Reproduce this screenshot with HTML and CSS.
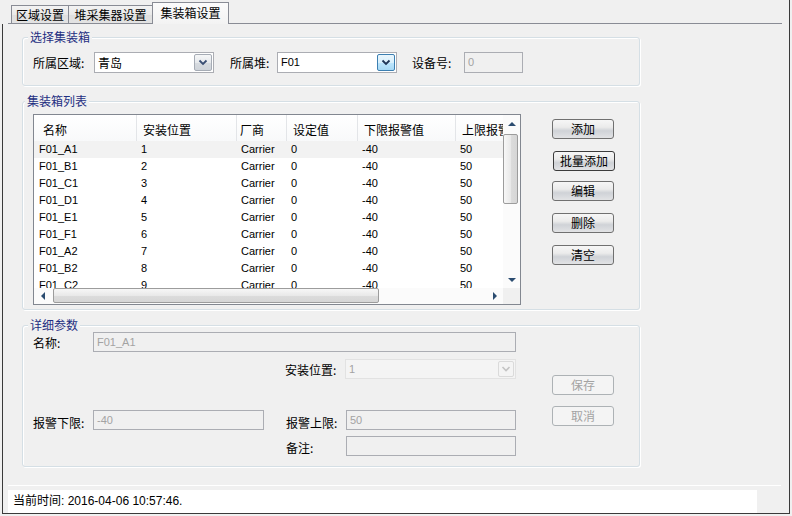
FILE: index.html
```html
<!DOCTYPE html>
<html lang="zh-CN">
<head>
<meta charset="utf-8">
<title>集装箱设置</title>
<link rel="stylesheet" href="styles.css">
</head>
<body>
<div class="window">
  <div class="tabs">
    <div class="tab-lead"></div>
    <div class="tab tab-1">区域设置</div>
    <div class="tab tab-2">堆采集器设置</div>
    <div class="tab tab-3">集装箱设置</div>
    <div class="tab-fill"></div>
  </div>
  <div class="main">
    <div class="panel">
      <div class="group g1">
        <div class="gtitle">选择集装箱</div>
        <div class="g1-row">
          <span class="lbl l-area">所属区域:</span>
          <div class="combo c-area">
            <span class="combo-text">青岛</span>
            <span class="drop"><svg width="16" height="15" viewBox="0 0 16 15"><path d="M4.5 5.5 L8 9 L11.5 5.5" fill="none" stroke="#3a4f74" stroke-width="1.8"/></svg></span>
          </div>
          <span class="lbl l-stack">所属堆:</span>
          <div class="combo c-stack">
            <span class="combo-text latin">F01</span>
            <span class="drop hot"><svg width="16" height="15" viewBox="0 0 16 15"><path d="M4.5 5.5 L8 9 L11.5 5.5" fill="none" stroke="#1f3556" stroke-width="1.8"/></svg></span>
          </div>
          <span class="lbl l-dev">设备号:</span>
          <div class="tbox dis t-dev">0</div>
        </div>
      </div>

      <div class="group g2">
        <div class="gtitle g2-title">集装箱列表</div>
        <div class="g2-row">
          <div class="list">
            <div class="lv">
              <div class="lv-head">
                <div class="hc hc1">名称</div>
                <div class="hc">安装位置</div>
                <div class="hc hc3">厂商</div>
                <div class="hc">设定值</div>
                <div class="hc">下限报警值</div>
                <div class="hc">上限报警值</div>
              </div>
              <div class="lv-row sel"><span class="c1">F01_A1</span><span>1</span><span class="c3">Carrier</span><span>0</span><span>-40</span><span>50</span></div>
              <div class="lv-row"><span class="c1">F01_B1</span><span>2</span><span class="c3">Carrier</span><span>0</span><span>-40</span><span>50</span></div>
              <div class="lv-row"><span class="c1">F01_C1</span><span>3</span><span class="c3">Carrier</span><span>0</span><span>-40</span><span>50</span></div>
              <div class="lv-row"><span class="c1">F01_D1</span><span>4</span><span class="c3">Carrier</span><span>0</span><span>-40</span><span>50</span></div>
              <div class="lv-row"><span class="c1">F01_E1</span><span>5</span><span class="c3">Carrier</span><span>0</span><span>-40</span><span>50</span></div>
              <div class="lv-row"><span class="c1">F01_F1</span><span>6</span><span class="c3">Carrier</span><span>0</span><span>-40</span><span>50</span></div>
              <div class="lv-row"><span class="c1">F01_A2</span><span>7</span><span class="c3">Carrier</span><span>0</span><span>-40</span><span>50</span></div>
              <div class="lv-row"><span class="c1">F01_B2</span><span>8</span><span class="c3">Carrier</span><span>0</span><span>-40</span><span>50</span></div>
              <div class="lv-row"><span class="c1">F01_C2</span><span>9</span><span class="c3">Carrier</span><span>0</span><span>-40</span><span>50</span></div>
            </div>
            <div class="vs">
              <div class="sb-btn"><i class="tri-up"></i></div>
              <div class="v-thumb"></div>
              <div class="sb-space"></div>
              <div class="sb-btn"><i class="tri-down"></i></div>
            </div>
            <div class="hs">
              <div class="sb-btn-h"><i class="tri-left"></i></div>
              <div class="h-thumb"></div>
              <div class="sb-space"></div>
              <div class="sb-btn-h"><i class="tri-right"></i></div>
            </div>
            <div class="corner"></div>
          </div>
          <div class="btns">
            <button class="btn b-add">添加</button>
            <button class="btn b-batch">批量添加</button>
            <button class="btn b-edit">编辑</button>
            <button class="btn b-del">删除</button>
            <button class="btn b-clear">清空</button>
          </div>
        </div>
      </div>

      <div class="group g3">
        <div class="gtitle">详细参数</div>
        <div class="g3-row">
          <div class="dleft">
            <div class="drow">
              <span class="dl">名称:</span>
              <div class="tbox dis t-name">F01_A1</div>
            </div>
            <div class="drow r-b">
              <span class="dl l-pos">安装位置:</span>
              <div class="combo dis c-pos">
                <span class="combo-text latin">1</span>
                <span class="drop off"><svg width="14" height="14" viewBox="0 0 14 14"><path d="M3.5 5 L7 8.5 L10.5 5" fill="none" stroke="#c4c4c4" stroke-width="1.6"/></svg></span>
              </div>
            </div>
            <div class="drow r-c">
              <span class="dl low">报警下限:</span>
              <div class="tbox dis t-low">-40</div>
              <span class="dl low l-high">报警上限:</span>
              <div class="tbox dis t-high">50</div>
            </div>
            <div class="drow r-d">
              <span class="dl l-note">备注:</span>
              <div class="tbox dis t-note"></div>
            </div>
          </div>
          <div class="dbtns">
            <button class="btn dis b-save">保存</button>
            <button class="btn dis b-cancel">取消</button>
          </div>
        </div>
      </div>
    </div>
    <div class="status">当前时间: 2016-04-06 10:57:46.</div>
  </div>
</div>
</body>
</html>
```
FILE: styles.css
```css
* { box-sizing: border-box; }
html, body { margin: 0; padding: 0; }
body {
  width: 792px;
  height: 516px;
  overflow: hidden;
  background: #f0f0f0;
  font-family: "Liberation Sans", "Noto Sans CJK SC", sans-serif;
  font-size: 12px;
  color: #000;
}

.window {
  margin-left: 2px;
  width: 788px;
  height: 514px;
  border-right: 1px solid #3a3a3a;
  border-bottom: 1px solid #3a3a3a;
}

/* ---- tabs ---- */
.tabs {
  display: flex;
  align-items: flex-end;
  height: 24px;
}
.tab-lead {
  margin-left: 6px;
  width: 3px;
  height: 1px;
  border-bottom: 1px solid #898c95;
}
.tab {
  height: 19px;
  border: 1px solid #898c95;
  border-right: none;
  text-align: center;
  line-height: 17px;
  font-family: "Noto Sans CJK SC", sans-serif;
  font-size: 12px;
  background: linear-gradient(#f3f3f3, #e9e9e9 50%, #dfdfdf 51%, #e3e3e3);
}
.tab-1 { width: 57px; }
.tab-2 { width: 84px; }
.tab-3 {
  width: 77px;
  height: 22px;
  border-right: 1px solid #898c95;
  border-bottom: none;
  line-height: 19px;
  background: linear-gradient(#fbfbfb, #f3f3f3);
}
.tab-fill {
  width: 553px;
  height: 1px;
  border-bottom: 1px solid #898c95;
}

/* ---- main ---- */
.main {
  height: 489px;
  border-left: 1px solid #3a3a3a;
}
.panel {
  display: flex;
  flex-direction: column;
  align-items: flex-start;
  margin-left: 5px;
  width: 773px;
  height: 462px;
  padding-left: 14px;
  border-bottom: 1px solid #ffffff;
}
.status {
  margin: 4px 0 0 5px;
  width: 749px;
  height: 23px;
  padding-left: 5px;
  background: #ffffff;
  line-height: 22px;
  font-size: 12px;
}

/* ---- groups ---- */
.group {
  width: 618px;
  border: 1px solid #d5dfe5;
  border-radius: 3px;
  box-shadow: inset 1px 1px 0 #ffffff, 1px 1px 0 #ffffff;
}
.g1 { margin-top: 13px; }
.g2, .g3 { margin-top: 15px; }
.gtitle {
  width: max-content;
  margin: -8px 0 0 5px;
  padding: 0 2px;
  height: 14px;
  line-height: 14px;
  background: #f0f0f0;
  color: #1f2f82;
  font-family: "Noto Sans CJK SC", sans-serif;
  font-size: 12px;
}
.g2-title { margin-left: 2px; }

.lbl, .dl {
  font-family: "Noto Sans CJK SC", sans-serif;
  white-space: nowrap;
}

/* group 1 */
.g1-row {
  display: flex;
  align-items: center;
  height: 21px;
  margin: 8px 0 12px;
  padding-left: 10px;
}
.l-area { width: 61px; }
.l-stack { margin-left: 16px; width: 47px; }
.l-dev { margin-left: 15px; width: 52px; }

.combo {
  display: flex;
  height: 21px;
  border: 1px solid #abadb3;
  background: #ffffff;
}
.c-area, .c-stack { width: 120px; }
.combo-text {
  flex: 1;
  padding-left: 3px;
  line-height: 19px;
  font-family: "Noto Sans CJK SC", sans-serif;
}
.combo-text.latin {
  font-family: "Liberation Sans", sans-serif;
  font-size: 11px;
}
.drop {
  display: flex;
  width: 18px;
  margin: 1px;
  border: 1px solid #a6acb5;
  border-radius: 2px;
  background: linear-gradient(#f6f7f8, #e6e9ec 50%, #d7dbe0 51%, #cfd4da);
}
.drop.hot {
  border-color: #3c7fb1;
  background: linear-gradient(#eaf6fd, #d9f0fc 50%, #bee6fd 51%, #a7d9f5);
}
.drop.off {
  width: 16px;
  border-color: #dadada;
  background: #f4f4f4;
}

.tbox {
  height: 21px;
  border: 1px solid #abadb3;
  background: #ffffff;
  padding-left: 3px;
  line-height: 19px;
  font-size: 11px;
}
.tbox.dis {
  background: #f0f0f0;
  color: #a3a3a3;
}
.t-dev { width: 59px; }

/* group 2 */
.g2-row {
  display: flex;
  margin: 6px 0 4px;
  padding-left: 10px;
}
.list {
  display: grid;
  grid-template-columns: 469px 17px;
  grid-template-rows: 173px 16px;
  width: 488px;
  height: 191px;
  border: 1px solid #828790;
  background: #ffffff;
}
.lv { overflow: hidden; }
.lv-head, .lv-row {
  display: grid;
  grid-template-columns: 103px 100px 50px 71px 98px 98px;
  width: 520px;
}
.lv-head {
  height: 26px;
  background: linear-gradient(#ffffff, #f8f9fa);
}
.hc {
  padding: 5px 0 0 6px;
  line-height: 20px;
  border-right: 1px solid #e3e5e8;
  font-family: "Noto Sans CJK SC", sans-serif;
  white-space: nowrap;
  overflow: hidden;
}
.hc1 { padding-left: 9px; }
.hc3 { padding-left: 3px; }
.lv-row {
  height: 17px;
  line-height: 17px;
  font-size: 11px;
}
.lv-row span { padding-left: 4px; white-space: nowrap; }
.lv-row .c1 { padding-left: 5px; }
.lv-row.sel { background: #f2f2f2; }

.vs, .hs { background: #fbfbfb; }
.vs {
  display: flex;
  flex-direction: column;
}
.sb-btn {
  height: 17px;
  display: flex;
  align-items: center;
  justify-content: center;
}
.sb-btn-h {
  width: 17px;
  display: flex;
  align-items: center;
  justify-content: center;
}
.sb-space { flex: 1; }
.v-thumb {
  width: 15px;
  height: 70px;
  margin-top: 2px;
  border: 1px solid #9c9c9c;
  border-radius: 2px;
  background: linear-gradient(to right, #f7f7f7, #e9e9e9 50%, #dcdcdc 51%, #d6d6d6);
}
.hs { display: flex; }
.h-thumb {
  width: 326px;
  height: 15px;
  margin-left: 2px;
  border: 1px solid #9c9c9c;
  border-radius: 2px;
  background: linear-gradient(#f7f7f7, #e9e9e9 50%, #dcdcdc 51%, #d6d6d6);
}
.corner { background: #f0f0f0; }
.tri-up, .tri-down, .tri-left, .tri-right { display: block; width: 0; height: 0; }
.tri-up {
  border-left: 4px solid transparent;
  border-right: 4px solid transparent;
  border-bottom: 4px solid #2b4c70;
}
.tri-down {
  border-left: 4px solid transparent;
  border-right: 4px solid transparent;
  border-top: 4px solid #2b4c70;
}
.tri-left {
  border-top: 4px solid transparent;
  border-bottom: 4px solid transparent;
  border-right: 4px solid #2b4c70;
}
.tri-right {
  border-top: 4px solid transparent;
  border-bottom: 4px solid transparent;
  border-left: 4px solid #2b4c70;
}

.btns, .dbtns {
  display: flex;
  flex-direction: column;
  align-items: flex-start;
}
.btns { margin-left: 31px; }
.btn {
  width: 62px;
  height: 20px;
  padding: 0;
  border: 1px solid #707070;
  border-radius: 3px;
  background: linear-gradient(#f6f6f6, #ebebeb 40%, #cfd2d7 60%, #e2e3e5);
  font-family: "Noto Sans CJK SC", sans-serif;
  font-size: 12px;
  line-height: 18px;
  color: #000;
  text-align: center;
}
.b-add { margin-top: 5px; }
.b-batch { margin-top: 12px; margin-left: 1px; border-color: #3c3c3c; }
.b-edit { margin-top: 10px; }
.b-del { margin-top: 12px; }
.b-clear { margin-top: 12px; }
.btn.dis {
  border-color: #adb2b5;
  background: #f4f4f4;
  color: #a3a3a3;
}

/* group 3 */
.g3-row {
  display: flex;
  margin-bottom: 10px;
}
.dleft {
  width: 493px;
  padding-left: 10px;
}
.drow {
  display: flex;
  align-items: center;
  height: 20px;
}
.dl { width: 60px; }
.t-name { width: 423px; height: 20px; line-height: 18px; }
.r-b { margin-top: 7px; }
.l-pos { margin-left: 252px; }
.combo.dis {
  width: 171px;
  height: 20px;
  border-color: #e2e2e2;
  background: #f4f4f4;
}
.combo.dis .combo-text { color: #a3a3a3; line-height: 18px; }
.r-c { margin-top: 31px; }
.dl.low { padding-top: 5px; }
.t-low { width: 171px; height: 20px; line-height: 18px; }
.l-high { margin-left: 22px; }
.t-high { width: 170px; height: 20px; line-height: 18px; }
.r-d { margin-top: 6px; }
.l-note { margin-left: 253px; padding-top: 3px; }
.t-note { width: 170px; height: 20px; }
.dbtns { margin-left: 36px; }
.b-save { margin-top: 43px; }
.b-cancel { margin-top: 11px; }
```
